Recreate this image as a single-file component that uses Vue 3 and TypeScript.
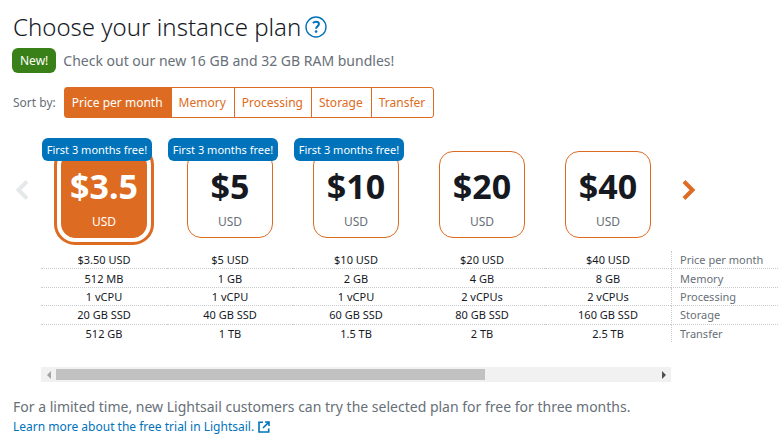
<script setup lang="ts">
import { ref } from 'vue'

interface Plan {
  price: string
  monthly: string
  memory: string
  cpu: string
  storage: string
  transfer: string
  trial: boolean
}

const plans: Plan[] = [
  { price: '$3.5', monthly: '$3.50 USD', memory: '512 MB', cpu: '1 vCPU', storage: '20 GB SSD', transfer: '512 GB', trial: true },
  { price: '$5', monthly: '$5 USD', memory: '1 GB', cpu: '1 vCPU', storage: '40 GB SSD', transfer: '1 TB', trial: true },
  { price: '$10', monthly: '$10 USD', memory: '2 GB', cpu: '1 vCPU', storage: '60 GB SSD', transfer: '1.5 TB', trial: true },
  { price: '$20', monthly: '$20 USD', memory: '4 GB', cpu: '2 vCPUs', storage: '80 GB SSD', transfer: '2 TB', trial: false },
  { price: '$40', monthly: '$40 USD', memory: '8 GB', cpu: '2 vCPUs', storage: '160 GB SSD', transfer: '2.5 TB', trial: false },
]

type SpecKey = 'monthly' | 'memory' | 'cpu' | 'storage' | 'transfer'

const specs: { key: SpecKey; label: string }[] = [
  { key: 'monthly', label: 'Price per month' },
  { key: 'memory', label: 'Memory' },
  { key: 'cpu', label: 'Processing' },
  { key: 'storage', label: 'Storage' },
  { key: 'transfer', label: 'Transfer' },
]

const selected = ref('$3.5')
const sortKey = ref<SpecKey>('monthly')
</script>

<template>
  <main class="page">
    <header class="title">
      <h1>Choose your instance plan</h1>
      <button type="button" class="help" aria-label="Help">
        <svg viewBox="0 0 22 22" width="22" height="22" fill="none" stroke="#0073bb">
          <circle cx="11" cy="11" r="10" stroke-width="1.4" />
          <path d="M7.9 7.1C8.8 6.2 9.9 5.8 11 5.8C12.8 5.8 13.9 6.7 13.9 8.1C13.9 10.2 11.1 10.3 11.1 12.8" stroke-width="2" />
          <circle cx="11.1" cy="15.6" r="1.3" fill="#0073bb" stroke="none" />
        </svg>
      </button>
    </header>

    <p class="news"><span class="new">New!</span>Check out our new 16 GB and 32 GB RAM bundles!</p>

    <div class="sort">
      <span id="sort-label">Sort by:</span>
      <div class="segments" role="group" aria-labelledby="sort-label">
        <button
          v-for="spec in specs"
          :key="spec.key"
          type="button"
          :class="{ active: sortKey === spec.key }"
          :aria-pressed="sortKey === spec.key"
          @click="sortKey = spec.key"
        >{{ spec.label }}</button>
      </div>
    </div>

    <section class="carousel">
      <button type="button" class="arrow prev" aria-label="Previous plans" disabled>
        <svg viewBox="0 0 14 20" width="14" height="20" fill="none" stroke="currentColor" stroke-width="4">
          <path d="M12 1.5L3.5 10L12 18.5" />
        </svg>
      </button>
      <div class="plans">
        <div v-for="plan in plans" :key="plan.price" class="slot">
          <label class="card" :class="{ chosen: selected === plan.price }">
            <input v-model="selected" type="radio" name="plan" :value="plan.price" />
            <strong>{{ plan.price }}</strong>
            <span>USD</span>
          </label>
          <span v-if="plan.trial" class="trial">First 3 months free!</span>
        </div>
      </div>
      <button type="button" class="arrow next" aria-label="Next plans">
        <svg viewBox="0 0 14 20" width="14" height="20" fill="none" stroke="currentColor" stroke-width="4">
          <path d="M2 1.5L10.5 10L2 18.5" />
        </svg>
      </button>
    </section>

    <div class="specs">
      <table>
        <colgroup>
          <col v-for="plan in plans" :key="plan.price" />
          <col class="labels" />
        </colgroup>
        <tbody>
          <tr v-for="spec in specs" :key="spec.key">
            <td v-for="plan in plans" :key="plan.price">{{ plan[spec.key] }}</td>
            <th scope="row">{{ spec.label }}</th>
          </tr>
        </tbody>
      </table>
    </div>

    <div class="scrollbar">
      <button type="button" aria-label="Scroll left" disabled>
        <svg viewBox="0 0 4 8" width="4" height="8" fill="currentColor"><path d="M4 0V8L0 4Z" /></svg>
      </button>
      <div class="track"><div class="thumb"></div></div>
      <button type="button" aria-label="Scroll right">
        <svg viewBox="0 0 4 8" width="4" height="8" fill="currentColor"><path d="M0 0V8L4 4Z" /></svg>
      </button>
    </div>

    <footer>
      <p>For a limited time, new Lightsail customers can try the selected plan for free for three months.</p>
      <a href="#trial">Learn more about the free trial in Lightsail.
        <svg viewBox="0 0 12 12" width="12" height="12" fill="none" stroke="currentColor" stroke-width="1.6">
          <path d="M5 1.3H1V11H10.7V7.5M7 1H11V5M11 1L5 7" />
        </svg>
      </a>
    </footer>
  </main>
</template>

<style>
body {
  background: #fff;
}
</style>

<style scoped>
.page {
  font-family: "Noto Sans", "Open Sans", sans-serif;
  font-size: 12px;
  color: #687078;
  padding-top: 12px;
}

button {
  font: inherit;
  border: 0;
  padding: 0;
  background: none;
}

svg {
  display: block;
}

h1,
p {
  margin: 0;
}

.title {
  display: flex;
  align-items: center;
  gap: 4px;
  height: 30px;
  padding: 0 13px;
}

h1 {
  font-size: 24px;
  line-height: 30px;
  font-weight: 300;
  color: #16191f;
}

.news {
  display: flex;
  align-items: center;
  gap: 7px;
  padding: 6px 12px 0;
  font-size: 14px;
  line-height: 25px;
}

.new {
  padding: 0 8px;
  border-radius: 6px;
  background: #3a8018;
  color: #fff;
  font-size: 12px;
}

.sort {
  display: flex;
  align-items: center;
  gap: 8px;
  padding: 14px 13px 0;
}

.segments {
  display: flex;
  height: 31px;
  border: 1px solid #dd6b22;
  border-radius: 3px;
  box-sizing: border-box;
}

.segments button {
  padding: 0 8px 0 7px;
  color: #dd6b22;
}

.segments button + button {
  border-left: 1px solid #dd6b22;
}

.segments .active {
  background: #dd6b22;
  color: #fff;
}

.carousel {
  display: grid;
  grid-template-columns: 41px 1fr 107px;
  margin-top: 20px;
}

.arrow {
  display: flex;
  align-items: center;
  height: 104px;
}

.prev {
  padding-left: 15px;
  color: #e6e9ea;
}

.next {
  padding-left: 11px;
  color: #dd6b22;
}

.plans {
  display: grid;
  grid-template-columns: repeat(5, 1fr);
}

.slot {
  position: relative;
  display: flex;
  justify-content: center;
  padding: 13px 0;
}

.card {
  display: flex;
  flex-direction: column;
  align-items: center;
  width: 86px;
  height: 87px;
  padding-top: 12px;
  box-sizing: border-box;
  border: 1px solid #dd6b22;
  border-radius: 14px;
}

.card input {
  position: absolute;
  opacity: 0;
}

.card strong {
  font-size: 34px;
  line-height: 44px;
  color: #16191f;
}

.card span {
  line-height: 28px;
}

.card.chosen {
  background: #dd6b22;
  outline: 3px solid #dd6b22;
  outline-offset: 4px;
}

.card.chosen strong,
.card.chosen span {
  color: #fff;
}

.trial {
  position: absolute;
  top: 0;
  left: 1px;
  width: 110px;
  border-radius: 6px;
  background: #0073bb;
  color: #fff;
  font-size: 11px;
  line-height: 23px;
  text-align: center;
  white-space: nowrap;
}

.specs {
  padding-left: 41px;
}

table {
  width: 100%;
  height: 91px;
  table-layout: fixed;
  border-collapse: separate;
  border-spacing: 0;
  font-size: 11px;
  line-height: 17px;
}

.labels {
  width: 107px;
}

td,
th {
  padding: 0;
  border-bottom: 1px dotted #c8cccf;
}

td {
  text-align: center;
  color: #16191f;
}

th {
  padding-left: 8px;
  border-left: 1px dotted #c8cccf;
  text-align: left;
  font-weight: 400;
}

tr:last-child td,
tr:last-child th {
  border-bottom: 0;
}

.scrollbar {
  display: grid;
  grid-template-columns: 15px 1fr 15px;
  height: 15px;
  margin: 25px 107px 0 41px;
  background: #f1f1f1;
}

.scrollbar button {
  display: flex;
  align-items: center;
  justify-content: center;
  color: #505050;
}

.scrollbar button:disabled {
  color: #a3a3a3;
}

.track {
  padding: 2px 0;
}

.thumb {
  width: 71.5%;
  height: 11px;
  background: #c1c1c1;
}

footer {
  padding: 14px 13px 0;
}

footer p {
  font-size: 14px;
  line-height: 22px;
}

footer a {
  display: inline-flex;
  align-items: center;
  gap: 4px;
  line-height: 18px;
  color: #0073bb;
  text-decoration: none;
}
</style>
